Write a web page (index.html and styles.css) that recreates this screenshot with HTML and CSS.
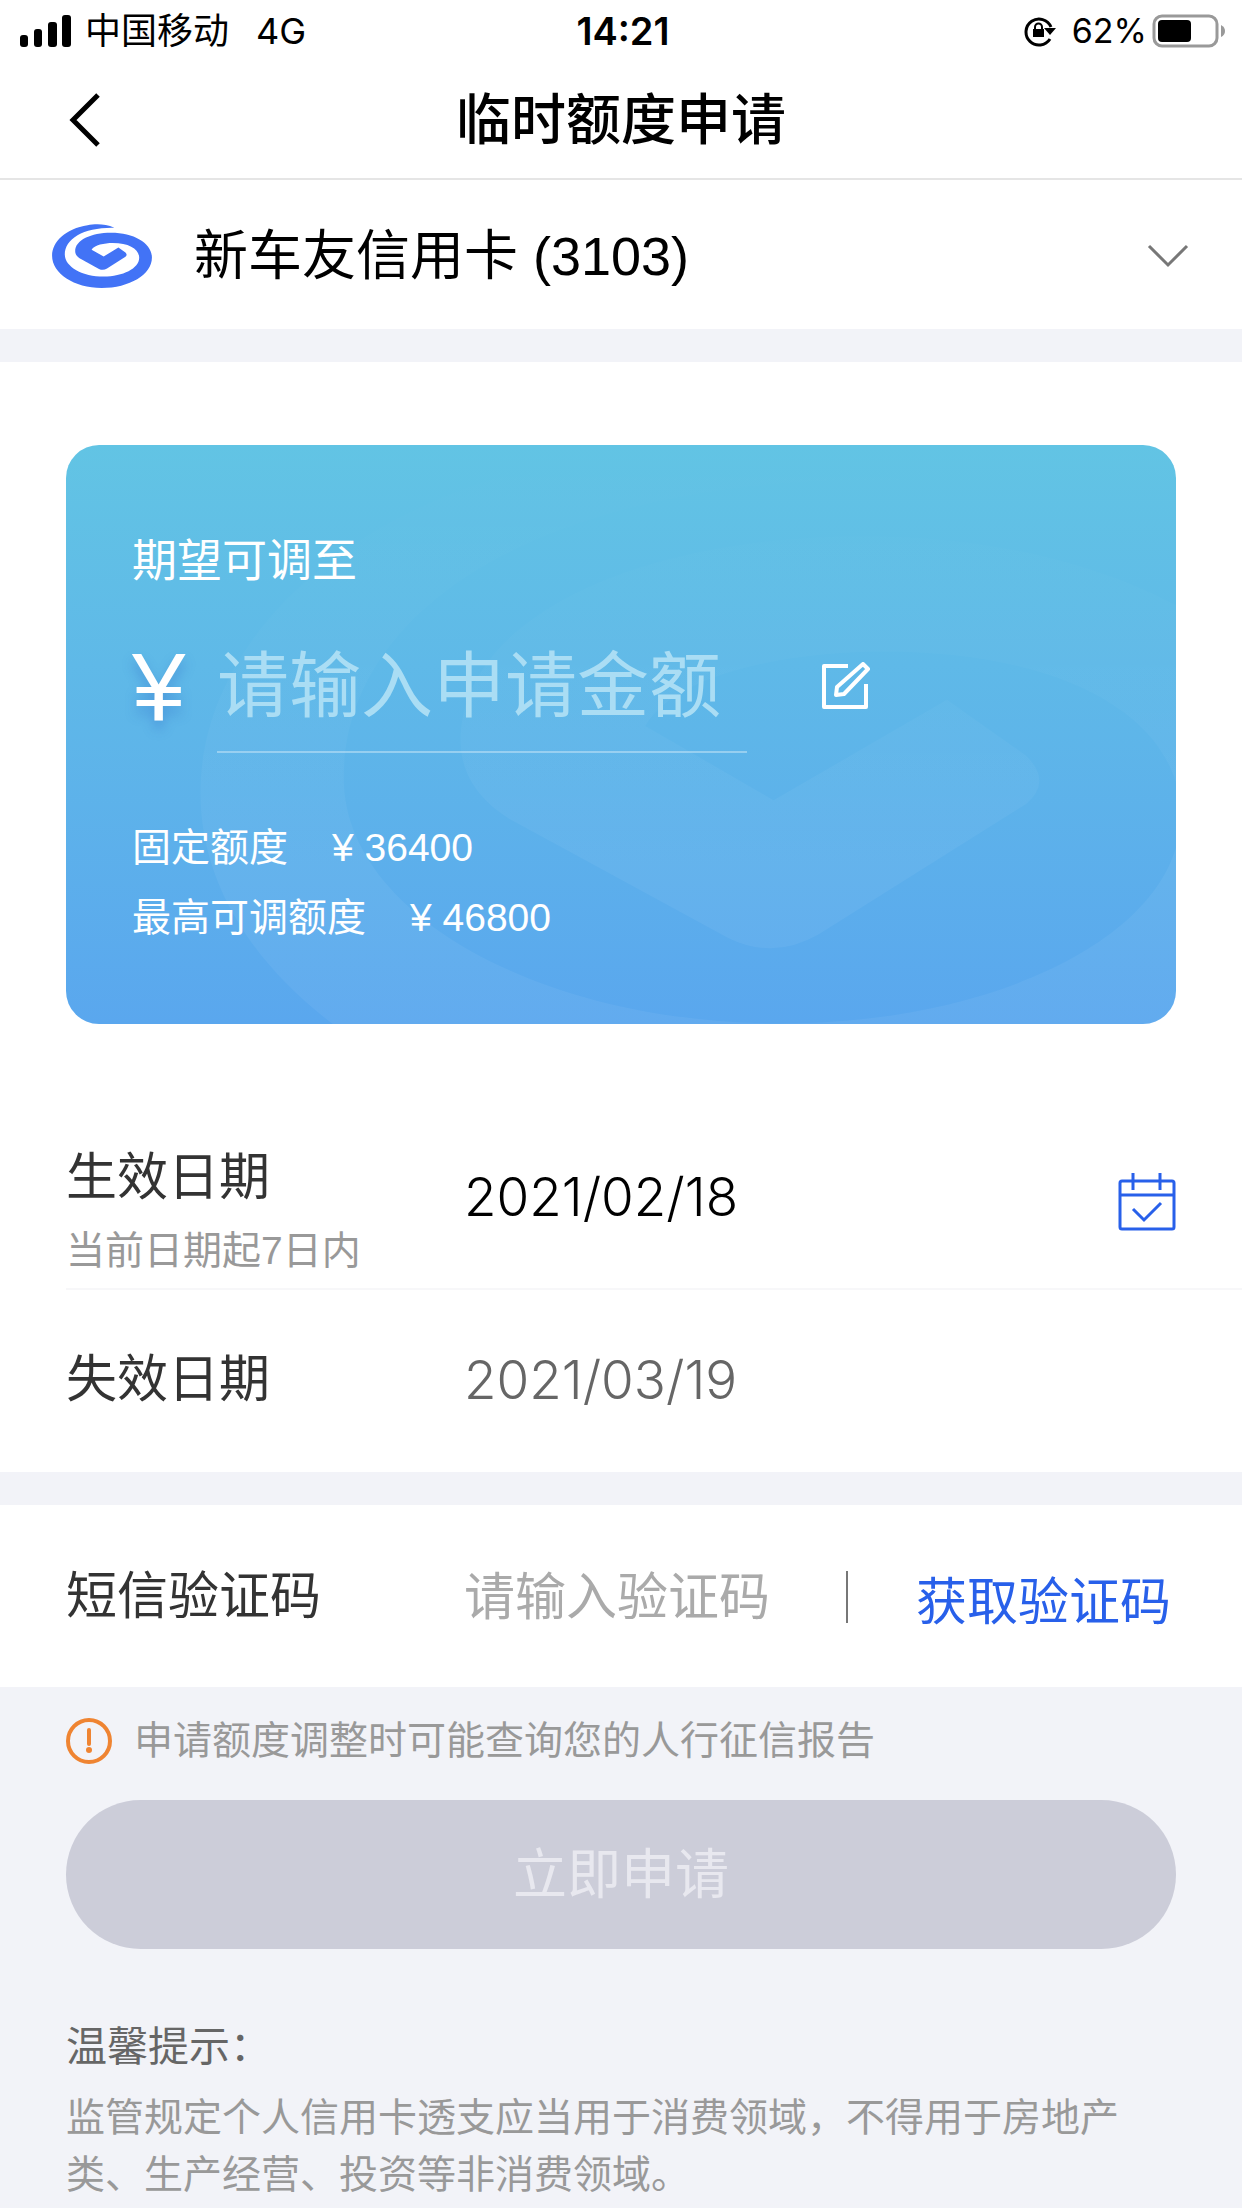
FILE: index.html
```html
<!DOCTYPE html>
<html lang="zh-CN">
<head>
<meta charset="utf-8">
<meta name="viewport" content="width=device-width, initial-scale=1">
<title>临时额度申请</title>
<link rel="stylesheet" href="styles.css">
</head>
<body>
<div class="status">
  <div class="status-left">
    <svg width="52" height="32" viewBox="0 0 52 32" aria-hidden="true"><rect y="20" width="8" height="12" rx="3"/><rect x="14" y="14" width="8" height="18" rx="3"/><rect x="28" y="7" width="9" height="25" rx="3"/><rect x="42" width="9" height="32" rx="3"/></svg>
    <span>中国移动</span>
    <span class="network">4G</span>
  </div>
  <div class="clock">14:21</div>
  <div class="status-right">
    <svg width="34" height="32" viewBox="0 0 34 32" aria-hidden="true">
      <path d="M28 24A13 13 0 1 1 29 12" fill="none" stroke="#000" stroke-width="3"/>
      <path d="M22 13h12l-6 7z"/>
      <path d="M11 14h11v8H11z"/>
      <path d="M13 15v-3a3 3 0 0 1 7 0v3" fill="none" stroke="#000" stroke-width="2"/>
    </svg>
    <span class="percent">62%</span>
    <svg width="74" height="34" viewBox="0 0 74 34" aria-hidden="true">
      <rect x="2" y="2" width="63" height="30" rx="8" fill="none" stroke="#999" stroke-width="3"/>
      <rect x="6" y="6" width="33" height="22" rx="4"/>
      <path d="M69 11q4 2 4 6t-4 6z" fill="#999"/>
    </svg>
  </div>
</div>

<header class="header">
  <button class="back" type="button" aria-label="返回">
    <svg width="34" height="54" viewBox="0 0 34 54"><path d="M30 2L5 27l25 25" fill="none" stroke="#000" stroke-width="5"/></svg>
  </button>
  <h1>临时额度申请</h1>
</header>

<main>
  <form>
    <div class="account">
      <svg class="bank-logo" viewBox="24 27 298 191" aria-hidden="true">
        <path fill="#4273f6" d="M210 38C180 25 150 27 130 31C65 41 24 80 24 122C24 175 90 218 172 218C255 218 322 178 322 127C322 85 270 53 200 53C140 53 93 75 93 108C93 117 98 124 106 129L164 161Q176 167 188 160L243 125Q250 119 243 112L222 97L178 124L142 104C150 90 180 84 205 84C255 84 284 103 284 128C284 160 235 184 178 184C115 184 62 155 62 118C62 70 120 36 210 38Z"/>
      </svg>
      <select class="account-select" aria-label="信用卡"><option>新车友信用卡 (3103)</option></select>
      <svg class="chevron" width="44" height="26" viewBox="0 0 44 26" aria-hidden="true"><path d="M3 3l19 19L41 3" fill="none" stroke="#777" stroke-width="3"/></svg>
    </div>

    <section class="amount">
      <div class="quota">
        <svg class="watermark" viewBox="0 0 1110 579" preserveAspectRatio="xMaxYMin slice" aria-hidden="true">
          <defs><linearGradient id="fade" x1="0" y1="0" x2="0" y2="1"><stop offset="0" stop-color="#fff" stop-opacity="0"/><stop offset="0.3" stop-color="#fff" stop-opacity="0.02"/><stop offset="0.6" stop-color="#fff" stop-opacity="0.05"/></linearGradient></defs>
          <path transform="translate(44 -106) scale(3.77 3.72)" fill="url(#fade)" d="M210 38C180 25 150 27 130 31C65 41 24 80 24 122C24 175 90 218 172 218C255 218 322 178 322 127C322 85 270 53 200 53C140 53 93 75 93 108C93 117 98 124 106 129L164 161Q176 167 188 160L243 125Q250 119 243 112L222 97L176 124L142 104C150 90 180 84 205 84C255 84 284 103 284 128C284 160 235 184 178 184C115 184 62 155 62 118C62 70 120 36 210 38Z"/>
        </svg>
        <label class="quota-label" for="amount">期望可调至</label>
        <div class="quota-entry">
          <span class="yen">¥</span>
          <input class="quota-input" id="amount" type="text" inputmode="decimal" placeholder="请输入申请金额">
          <button class="edit" type="button" aria-label="编辑金额">
            <svg width="50" height="50" viewBox="0 0 50 50"><path d="M27 4H3v41h42V22" fill="none" stroke="#fff" stroke-width="4" stroke-linejoin="round"/><path d="M42 2l5 5-24 25-8 1 1-8z" fill="none" stroke="#fff" stroke-width="4" stroke-linejoin="round"/></svg>
          </button>
        </div>
        <p class="quota-line"><span>固定额度</span><span>¥ 36400</span></p>
        <p class="quota-line"><span>最高可调额度</span><span>¥ 46800</span></p>
      </div>
    </section>

    <section class="dates">
      <div class="row row-start">
        <div class="row-label">
          <label for="start">生效日期</label>
          <small>当前日期起7日内</small>
        </div>
        <input class="field date" id="start" type="text" value="2021/02/18" readonly>
        <button class="calendar" type="button" aria-label="选择日期">
          <svg width="58" height="58" viewBox="0 0 58 58"><g fill="none" stroke="#2860ea" stroke-width="3"><rect x="2" y="8" width="54" height="48" rx="2"/><path d="M2 22h54M15 0v17M42 0v17M15 36l11 11 17-17"/></g></svg>
        </button>
      </div>
      <div class="row row-end">
        <label class="row-label" for="end">失效日期</label>
        <input class="field date field-muted" id="end" type="text" value="2021/03/19" readonly>
      </div>
    </section>

    <section class="row row-code">
      <label class="row-label" for="code">短信验证码</label>
      <input class="field" id="code" type="text" inputmode="numeric" placeholder="请输入验证码">
      <button class="get-code" type="button">获取验证码</button>
    </section>

    <p class="notice">
      <svg width="46" height="46" viewBox="0 0 46 46" aria-hidden="true"><circle cx="23" cy="23" r="21" fill="none" stroke="#ef8432" stroke-width="4"/><path d="M23 12v14" stroke="#ef8432" stroke-width="4" stroke-linecap="round"/><circle cx="23" cy="32" r="3" fill="#ef8432"/></svg>
      <span>申请额度调整时可能查询您的人行征信报告</span>
    </p>
    <div class="actions"><button class="submit" type="submit" disabled>立即申请</button></div>
  </form>

  <section class="tips">
    <h2>温馨提示：</h2>
    <p>监管规定个人信用卡透支应当用于消费领域，不得用于房地产类、生产经营、投资等非消费领域。</p>
  </section>
</main>
</body>
</html>
```
FILE: styles.css
```css
* { box-sizing: border-box; }

body {
  margin: 0;
  background: #f2f3f8;
  color: #000;
  font-family: "Liberation Sans", "Noto Sans CJK SC", sans-serif;
}

h1, h2, p { margin: 0; font-weight: 400; }

button, input, select {
  margin: 0;
  padding: 0;
  border: 0;
  background: none;
  color: inherit;
  font: inherit;
}

input { min-width: 0; }
svg { display: block; flex: none; }

/* Status bar */
.status {
  display: grid;
  grid-template-columns: 1fr auto 1fr;
  align-items: center;
  height: 62px;
  padding: 0 16px 0 20px;
  background: #fff;
  font-family: Inter, "Noto Sans CJK SC", sans-serif;
  font-size: 36px;
  line-height: 62px;
}

.status-left, .status-right { display: flex; align-items: center; }
.status-left { gap: 13px; }
.network { margin-left: 14px; }
.status-right { justify-content: flex-end; }
.percent { margin: 0 5px 0 16px; font-size: 34px; }
.clock { font-size: 38px; font-weight: 600; }

/* Title bar */
.header {
  display: grid;
  grid-template-columns: 1fr auto 1fr;
  align-items: center;
  height: 118px;
  padding: 0 68px;
  border-bottom: 2px solid #e5e5e5;
  background: #fff;
}

.back { justify-self: start; }
.header h1 { font-size: 55px; font-weight: 500; line-height: 80px; }

/* Card picker */
.account {
  display: flex;
  align-items: center;
  gap: 42px;
  height: 149px;
  padding: 2px 52px 0;
  background: #fff;
}

.bank-logo { width: 100px; height: 64px; }

.account-select {
  flex: 1;
  height: 80px;
  appearance: none;
  font-size: 54px;
}

/* Amount card */
.amount {
  margin-top: 33px;
  padding: 83px 66px 0;
  background: #fff;
}

.quota {
  position: relative;
  padding: 84px 66px 71px;
  overflow: hidden;
  border-radius: 33px;
  background: linear-gradient(#62c4e4, #5aa7ee);
  color: #fff;
}

.watermark { position: absolute; inset: 0; width: 100%; height: 100%; }
.quota-label, .quota-entry, .quota-line { position: relative; }

.quota-label { display: block; font-size: 45px; line-height: 66px; }

.quota-entry {
  display: flex;
  align-items: center;
  height: 132px;
  margin: 26px 0 60px;
  font-size: 72px;
  text-shadow: 0 8px 12px rgba(50, 110, 200, 0.4);
}

.yen { width: 85px; font-size: 96px; line-height: 132px; }

.quota-input {
  width: 530px;
  height: 132px;
  border-bottom: 2px solid rgba(255, 255, 255, 0.35);
}

.quota-input::placeholder { color: #aaddf4; opacity: 1; }
.edit { margin-left: 74px; }

.quota-line {
  display: flex;
  gap: 44px;
  font-size: 39px;
  line-height: 70px;
}

/* Form rows */
.dates { padding: 118px 0 0 66px; background: #fff; }

.row { display: flex; align-items: center; font-size: 51px; }
.row-label { flex: none; width: 398px; color: #333; line-height: 72px; }
.row-label label { display: block; }
.row-label small { display: block; color: #999; font-size: 39px; line-height: 74px; }

.row-start {
  align-items: flex-start;
  padding-right: 66px;
  border-bottom: 2px solid #f7f7f9;
}

.row-start .field { height: 110px; }
.calendar { display: flex; align-items: center; height: 120px; }

.row-end { height: 182px; padding-bottom: 2px; }

.field { flex: 1; height: 80px; }
.date { font-family: Inter, sans-serif; font-size: 53px; font-weight: 300; }
.field-muted { color: #666; }

.row-code {
  height: 182px;
  margin-top: 33px;
  padding: 2px 71px 0 66px;
  background: #fff;
}

.field::placeholder { color: #aaa; opacity: 1; }

.get-code {
  padding: 12px 0 0 68px;
  border-left: 2px solid #777;
  color: #2860ea;
  line-height: 40px;
}

/* Notice and submit */
.notice {
  display: flex;
  align-items: center;
  gap: 22px;
  height: 106px;
  padding: 2px 66px 0;
  color: #999;
  font-size: 39px;
  line-height: 56px;
}

.actions { padding: 7px 66px 0; }

.submit {
  display: block;
  width: 100%;
  height: 149px;
  border-radius: 75px;
  background: #cccdd9;
  color: #e8e8ef;
  font-size: 54px;
  line-height: 80px;
}

/* Tips */
.tips { padding: 66px 66px 0; }
.tips h2 { color: #666; font-size: 41px; line-height: 64px; }
.tips p { margin-top: 10px; color: #999; font-size: 39px; line-height: 57px; }
```
